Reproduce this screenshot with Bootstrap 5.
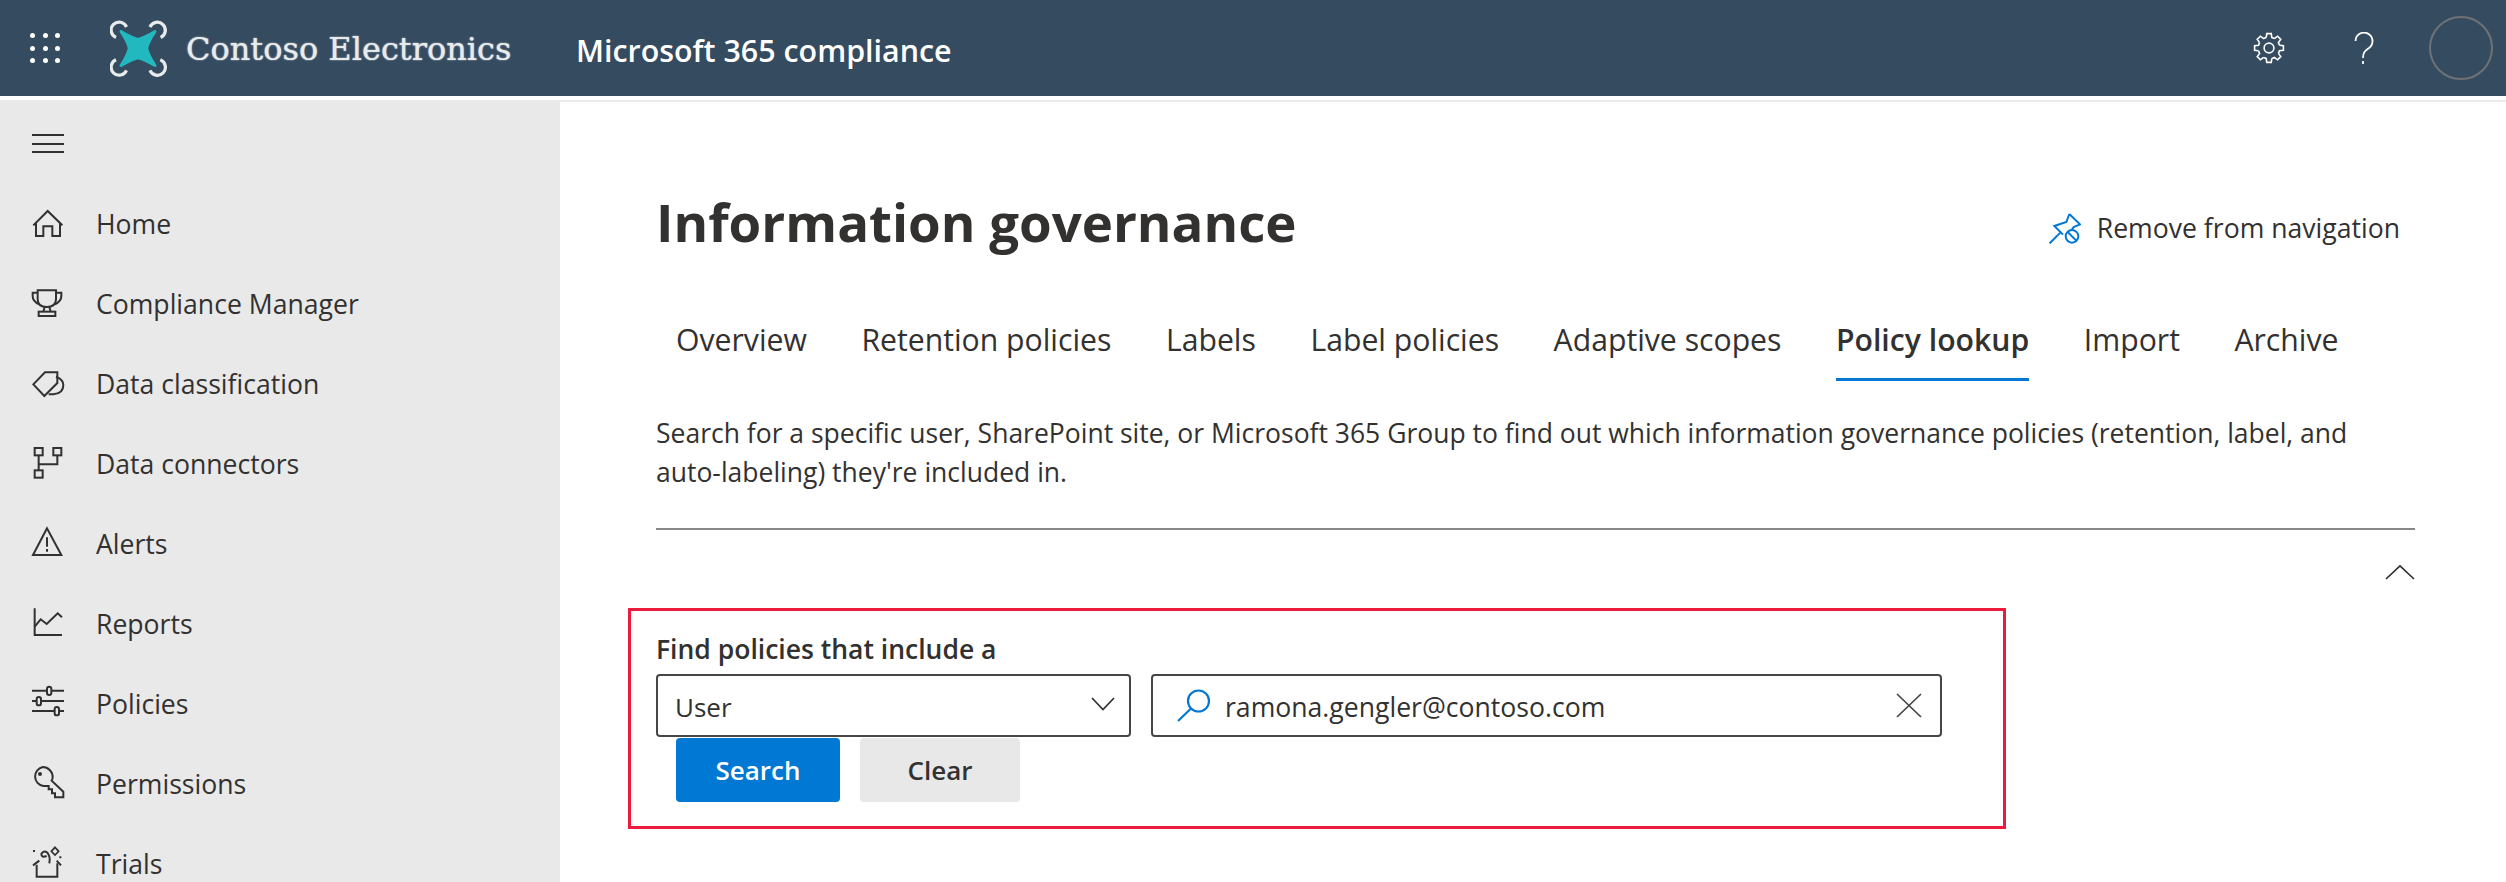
<!DOCTYPE html>
<html lang="en">
<head>
<meta charset="UTF-8">
<meta name="viewport" content="width=device-width, initial-scale=1.0">
<title>Information governance - Microsoft 365 compliance</title>
<link href="https://cdn.jsdelivr.net/npm/bootstrap@5.3.0/dist/css/bootstrap.min.css" rel="stylesheet">
<script src="https://cdn.jsdelivr.net/npm/bootstrap@5.3.0/dist/js/bootstrap.bundle.min.js"></script>
<style>
    html, body { height: 882px; overflow: hidden; }
    body { font-family: "Open Sans", "Liberation Sans", sans-serif; color: #323130; background: #fff; }

    /* top bar */
    .top-bar { height: 96px; background: #354b60; color: #fff; margin-bottom: 4px; }
    .waffle { width: 30px; height: 30px; margin-left: 30px; display: grid; grid-template-columns: repeat(3, 5px); grid-template-rows: repeat(3, 5px); justify-content: space-between; align-content: space-between; }
    .waffle i { background: #fff; border-radius: 50%; }
    .logo-mark { width: 58px; height: 58px; margin-left: 50px; }
    .logo-name { margin-left: 18px; width: 390px; padding-top: 2px; font-family: "DejaVu Serif", serif; font-size: 32px; line-height: 40px; color: #e8ebec; text-shadow: 0 0 1.5px #e8ebec; white-space: nowrap; }
    .app-name { font-size: 30.4px; font-weight: 600; line-height: 40px; padding-top: 5px; }
    .gear-btn { width: 32px; height: 32px; margin-right: 69px; }
    .help-btn { width: 20px; height: 32px; margin-right: 55px; }
    .avatar { width: 64px; height: 64px; margin-right: 13px; border: 2px solid #6f7274; border-radius: 50%; }

    /* left nav */
    .page-body { height: 786px; }
    .side-nav { width: 560px; flex: none; background: #e9e9e9; overflow: hidden; }
    .burger { margin: 34px 0 0 32px; width: 32px; height: 19px; display: flex; flex-direction: column; justify-content: space-between; }
    .burger i { display: block; height: 2px; background: #323130; }
    .side-list { margin-top: 32px; }
    .side-list .nav-link { height: 80px; padding: 0 0 0 32px; display: flex; align-items: center; gap: 32px; font-size: 26.6px; color: #323130; }
    .side-ico { width: 32px; height: 32px; flex: none; fill: none; stroke: #323130; stroke-width: 6; overflow: visible; }

    /* main */
    .main-pane { flex: 1; min-width: 0; border-top: 2px solid #ebebeb; padding: 84px 91px 0 96px; }
    .page-title { font-size: 52.8px; font-weight: 700; line-height: 72px; margin: 0; }
    .unpin { font-size: 26.6px; line-height: 40px; gap: 16px; margin: 0 15px 0 0; padding-top: 22px; }
    .unpin svg { width: 32px; height: 32px; }
    .tab-row { margin-top: 63px; padding-left: 20px; gap: 54.5px; }
    .tab-row .nav-link { padding: 0 0 19px; font-size: 30.2px; line-height: 38px; color: #323130; border-bottom: 3px solid transparent; }
    .tab-row .nav-link.active { font-weight: 600; border-bottom-color: #0078d4; }
    .blurb { margin: 33px 0 0; font-size: 26.5px; line-height: 39px; }
    .rule-line { height: 2px; margin: 36px 0 0; background: #8a8886; opacity: 1; border: 0; }
    .collapse-ico { width: 30px; height: 16px; margin: 34px 0 0; display: block; }

    .find-box { width: 1378px; height: 221px; margin: 28px 0 0 -28px; padding: 21px 0 0 25px; border: 3px solid #ed1c3f; }
    .find-label { font-size: 26.5px; font-weight: 600; line-height: 34px; margin: 0 0 8px; padding: 0; display: block; color: #323130; }
    .find-row { gap: 20px; }
    .type-pick { width: 475px; height: 63px; flex: none; }
    .type-pick .form-select { height: 63px; padding: 4px 50px 0 17px; font-size: 26px; color: #323130; border: 2px solid #484644; border-radius: 4px; background-image: none; box-shadow: none; font-family: inherit; }
    .type-pick svg { position: absolute; right: 16px; top: 23px; width: 24px; height: 14px; pointer-events: none; }
    .search-wrap { width: 791px; height: 63px; flex: none; border: 2px solid #484644; border-radius: 4px; padding: 0 18px 0 24px; }
    .search-wrap .form-control { border: 0; padding: 5px 0 0 14px; font-size: 26.6px; color: #323130; box-shadow: none; background: transparent; }
    .search-wrap svg { flex: none; }
    .find-btns { gap: 20px; margin: 1px 0 0 20px; }
    .find-btns .btn { height: 64px; font-size: 26px; font-weight: 600; border: 0; border-radius: 4px; padding: 0; }
    .go-btn { width: 164px; background: #0078d4; color: #fff; }
    .wipe-btn { width: 160px; background: #e8e8e8; color: #323130; }
</style>
</head>
<body>

<!-- top bar -->
<header class="top-bar d-flex align-items-center">
    <div class="waffle"><i></i><i></i><i></i><i></i><i></i><i></i><i></i><i></i><i></i></div>
    <svg class="logo-mark" viewBox="0 0 58 58" fill="none">
        <path d="M11 12.5 Q22 19 28 20.5 Q34 19 45 12.5 Q38 23 36.7 29.3 Q38 36 45 46.5 Q34 40 28 38.7 Q22 40 11 46.5 Q18 36 19.3 29.3 Q18 23 11 12.5 Z" fill="#22b8bf" stroke="#22b8bf" stroke-width="3" stroke-linejoin="round"/>
        <path d="M16.5 8 A8 8 0 1 0 6 18.5" stroke="#e8ebec" stroke-width="3.2"/>
        <path d="M40 8 A8 8 0 1 1 50.6 18.5" stroke="#e8ebec" stroke-width="3.2"/>
        <path d="M16.5 51.3 A8 8 0 1 1 6 40.8" stroke="#e8ebec" stroke-width="3.2"/>
        <path d="M40 51.3 A8 8 0 1 0 50.3 40.8" stroke="#e8ebec" stroke-width="3.2"/>
    </svg>
    <div class="logo-name">Contoso Electronics</div>
    <div class="app-name flex-grow-1">Microsoft 365 compliance</div>
    <svg class="gear-btn" viewBox="-17 -17 34 34" fill="none" stroke="#fff" stroke-width="1.7">
        <defs><path id="gearTooth" d="M-3 -11.1 L-2.4 -15.3 H2.4 L3 -11.1 A11.5 11.5 0 0 1 5.75 -9.96"/></defs>
        <use href="#gearTooth"/><use href="#gearTooth" transform="rotate(45)"/><use href="#gearTooth" transform="rotate(90)"/><use href="#gearTooth" transform="rotate(135)"/>
        <use href="#gearTooth" transform="rotate(180)"/><use href="#gearTooth" transform="rotate(225)"/><use href="#gearTooth" transform="rotate(270)"/><use href="#gearTooth" transform="rotate(315)"/>
        <circle r="5.2"/>
    </svg>
    <svg class="help-btn" viewBox="0 0 20 32" fill="none" stroke="#fff" stroke-width="1.8">
        <path d="M1.5 9 A8.5 8.5 0 1 1 15 16 C11 18.5 9 20.5 9 26"/>
        <path d="M9 29 V32"/>
    </svg>
    <div class="avatar"></div>
</header>

<div class="page-body d-flex">
    <!-- left nav -->
    <aside class="side-nav">
        <div class="burger"><i></i><i></i><i></i></div>
        <nav class="nav flex-column side-list">
            <a class="nav-link" href="#"><svg class="side-ico" viewBox="96 84 96 96"><path d="M100 133 L143 90 L187 133"/><path d="M108 125 V165 H130 V136 H157 V165 H180 V125"/></svg>Home</a>
            <a class="nav-link" href="#"><svg class="side-ico" viewBox="96 324 96 96"><path d="M113 328 H168 V355 Q168 378 140 378 Q113 378 113 355 Z"/><path d="M113 335 H98 V345 Q98 362 118 370"/><path d="M168 335 H184 V345 Q184 362 164 370"/><path d="M134 378 L130 392 M148 378 L152 392"/><rect x="116" y="392" width="50" height="13"/></svg>Compliance Manager</a>
            <a class="nav-link" href="#"><svg class="side-ico" viewBox="96 564 96 96"><path d="M100 610 L135 574 H172 V606 L133 645 Z"/><path d="M168 587 Q190 596 190 612 Q190 638 160 640 H146"/></svg>Data classification</a>
            <a class="nav-link" href="#"><svg class="side-ico" viewBox="96 804 96 96"><rect x="104" y="801" width="24" height="22"/><rect x="160" y="801" width="24" height="22"/><rect x="104" y="868" width="24" height="22"/><path d="M116 823 V868 M116 850 H172 V823"/></svg>Data connectors</a>
            <a class="nav-link" href="#"><svg class="side-ico" viewBox="96 -3 96 96"><path d="M141 -5 L99 75 H184 Z"/><path d="M141 22 V50 M141 57 V65"/></svg>Alerts</a>
            <a class="nav-link" href="#"><svg class="side-ico" viewBox="96 237 96 96"><path d="M104 235 V315 H186"/><path d="M104 290 L122 268 L140 282 L173 250 L186 262"/></svg>Reports</a>
            <a class="nav-link" href="#"><svg class="side-ico" viewBox="96 477 96 96"><path d="M96 482 H140 M154 482 H192 M96 513 H110 M124 513 H192 M96 543 H164 M178 543 H192"/><rect x="141" y="470" width="13" height="25" rx="6.5"/><rect x="110" y="501" width="13" height="25" rx="6.5"/><rect x="164" y="531" width="13" height="25" rx="6.5"/></svg>Policies</a>
            <a class="nav-link" href="#"><svg class="side-ico" viewBox="96 717 96 96"><path d="M128 711 A30 30 0 0 1 158 741 Q158 748 155 752 L190 785 V802 H165 V790 H156 V778 H146 V768 H130 A29 29 0 0 1 128 711 Z"/><circle cx="120" cy="732" r="3"/></svg>Permissions</a>
            <a class="nav-link" href="#"><svg class="side-ico" viewBox="96 957 96 96"><path d="M110 1004 V1040 H172 V1000"/><path d="M99 1006 L118 992 M183 1006 L170 992"/><path d="M148 1000 Q152 980 142 968 Q130 960 124 972 Q124 984 140 978"/><path d="M165 952 L176 964 L165 975 L154 964 Z" stroke-width="5"/><path d="M102 960 V966 M181 979 V985"/></svg>Trials</a>
        </nav>
    </aside>

    <!-- main -->
    <main class="main-pane">
        <div class="d-flex justify-content-between align-items-start">
            <h1 class="page-title">Information governance</h1>
            <div class="unpin d-flex align-items-center">
                <svg viewBox="144 630 96 96" fill="none" stroke="#0078d4" stroke-width="6">
                    <path d="M205 636 L237 667 L218 675 L212 684 M205 636 L196 660 L160 672 L186 698"/>
                    <path d="M146 724 L178 692"/>
                    <circle cx="213" cy="703" r="19"/>
                    <path d="M200 690 L226 716"/>
                </svg>
                <span>Remove from navigation</span>
            </div>
        </div>

        <ul class="nav tab-row">
            <li class="nav-item"><a class="nav-link" href="#">Overview</a></li>
            <li class="nav-item"><a class="nav-link" href="#">Retention policies</a></li>
            <li class="nav-item"><a class="nav-link" href="#">Labels</a></li>
            <li class="nav-item"><a class="nav-link" href="#">Label policies</a></li>
            <li class="nav-item"><a class="nav-link" href="#">Adaptive scopes</a></li>
            <li class="nav-item"><a class="nav-link active" href="#">Policy lookup</a></li>
            <li class="nav-item"><a class="nav-link" href="#">Import</a></li>
            <li class="nav-item"><a class="nav-link" href="#">Archive</a></li>
        </ul>

        <p class="blurb">Search for a specific user, SharePoint site, or Microsoft 365 Group to find out which information governance policies (retention, label, and auto-labeling) they're included in.</p>
        <hr class="rule-line">
        <div class="d-flex justify-content-end">
            <svg class="collapse-ico" viewBox="0 0 30 16" fill="none" stroke="#323130" stroke-width="1.7"><path d="M1 15 L15 2 L29 15"/></svg>
        </div>

        <!-- policy search -->
        <form class="find-box" onsubmit="return false">
            <label class="find-label form-label" for="policyType">Find policies that include a</label>
            <div class="find-row d-flex">
                <div class="type-pick position-relative">
                    <select id="policyType" class="form-select">
                        <option>User</option>
                        <option>SharePoint site</option>
                        <option>Microsoft 365 Group</option>
                    </select>
                    <svg viewBox="0 0 24 14" fill="none" stroke="#323130" stroke-width="1.7"><path d="M1 1 L12 12.5 L23 1"/></svg>
                </div>
                <div class="search-wrap d-flex align-items-center">
                    <svg width="34" height="33" viewBox="0 0 34 33" fill="none" stroke="#0078d4" stroke-width="2.2"><circle cx="21.5" cy="12" r="10.5"/><path d="M14 19.5 L1 32"/></svg>
                    <input class="form-control" type="text" value="ramona.gengler@contoso.com" aria-label="Search">
                    <svg width="26" height="25" viewBox="0 0 26 25" fill="none" stroke="#484644" stroke-width="1.7"><path d="M1 1 L25 24 M25 1 L1 24"/></svg>
                </div>
            </div>
            <div class="find-btns d-flex">
                <button class="btn go-btn" type="button">Search</button>
                <button class="btn wipe-btn" type="button">Clear</button>
            </div>
        </form>
    </main>
</div>

</body>
</html>
